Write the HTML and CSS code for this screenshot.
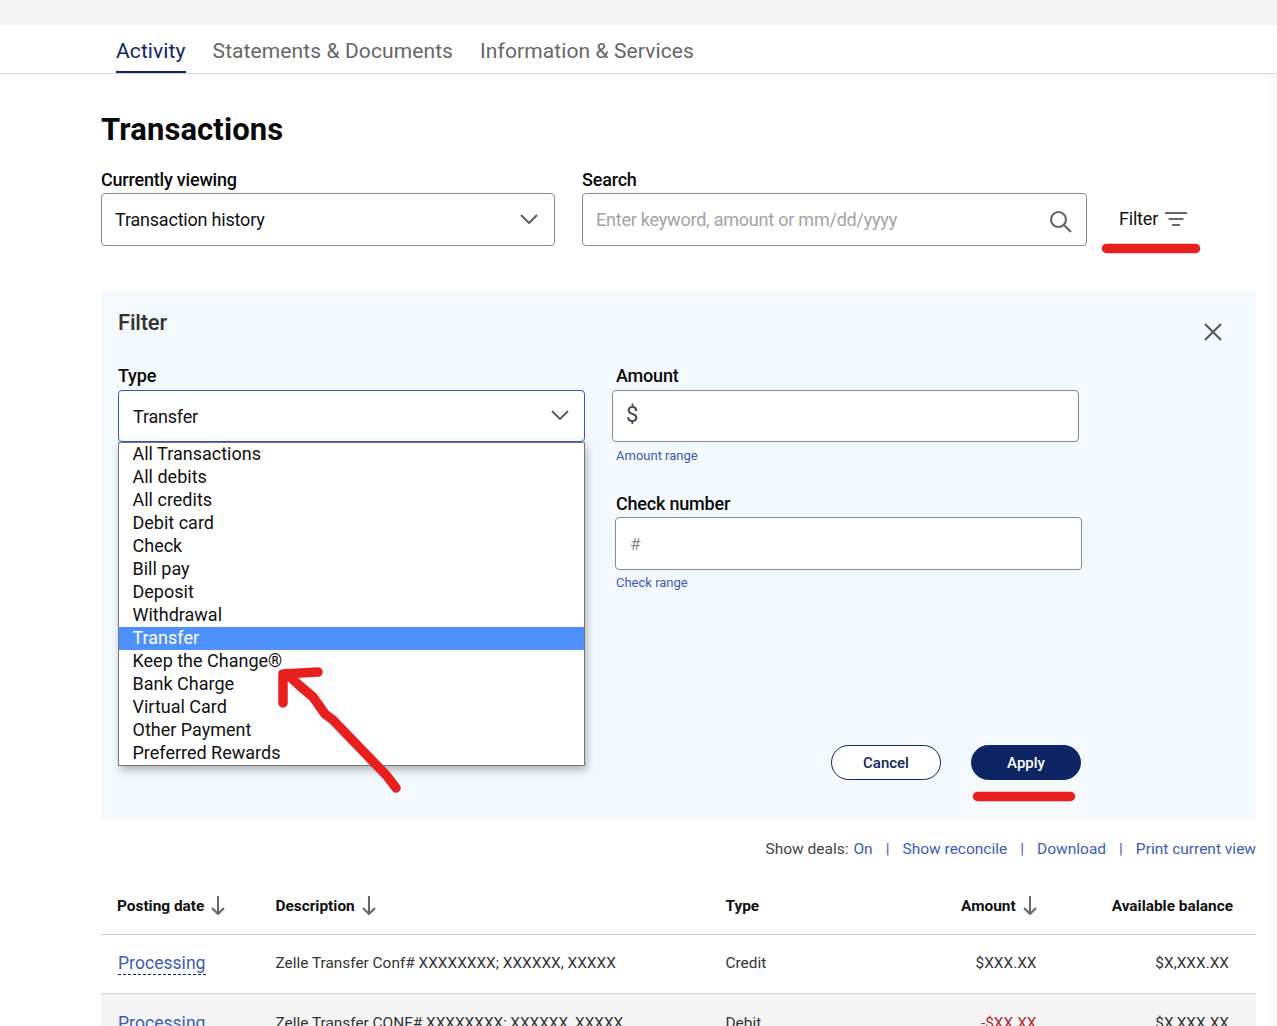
FILE: index.html
```html
<!DOCTYPE html>
<html lang="en">
<head>
  <meta charset="UTF-8" />
  <meta name="viewport" content="width=device-width, initial-scale=1" />
  <title>Activity - Transactions</title>
  <link rel="stylesheet" href="styles.css">
</head>
<body>

<div class="top-band"></div>

<nav class="tabs">
  <a class="tab active">Activity</a>
  <a class="tab">Statements &amp; Documents</a>
  <a class="tab">Information &amp; Services</a>
</nav>

<main class="content">
  <h1>Transactions</h1>

  <div class="toolbar">
    <div class="field view-field">
      <label class="label">Currently viewing</label>
      <div class="box select-box">
        <span>Transaction history</span>
        <svg class="chevron" width="18" height="10" viewBox="0 0 18 10"><path d="M1 1l8 8 8-8" /></svg>
      </div>
    </div>
    <div class="field search-field">
      <label class="label">Search</label>
      <div class="box select-box">
        <span class="placeholder">Enter keyword, amount or mm/dd/yyyy</span>
        <svg class="search-icon" width="24" height="24" viewBox="0 0 24 24"><circle cx="9.500" cy="9.500" r="7.500" /><path d="M15 15l7 7" /></svg>
      </div>
    </div>
    <div class="filter-toggle">
      <span>Filter</span>
      <svg class="filter-icon" width="22" height="14" viewBox="0 0 22 14"><path d="M0 1h22M3.500 7h15M7 13h8" /></svg>
    </div>
  </div>

  <section class="filter-panel">
    <div class="panel-head">
      <h2>Filter</h2>
      <svg class="close-icon" width="18" height="18" viewBox="0 0 18 18"><path d="M1 1l16 16M17 1L1 17" /></svg>
    </div>

    <div class="panel-body">
      <div class="field type-field">
        <label class="label">Type</label>
        <div class="box select-box focused">
          <span>Transfer</span>
          <svg class="chevron" width="18" height="10" viewBox="0 0 18 10"><path d="M1 1l8 8 8-8" /></svg>
        </div>
        <ul class="type-menu">
          <li>All Transactions</li>
          <li>All debits</li>
          <li>All credits</li>
          <li>Debit card</li>
          <li>Check</li>
          <li>Bill pay</li>
          <li>Deposit</li>
          <li>Withdrawal</li>
          <li class="selected">Transfer</li>
          <li>Keep the Change®</li>
          <li>Bank Charge</li>
          <li>Virtual Card</li>
          <li>Other Payment</li>
          <li>Preferred Rewards</li>
        </ul>
      </div>

      <div class="side-fields">
        <div class="field amount-field">
          <label class="label">Amount</label>
          <div class="box amount-box"><span class="dollar">$</span></div>
          <a class="hint">Amount range</a>
        </div>
        <div class="field check-field">
          <label class="label">Check number</label>
          <div class="box check-box"><span class="hash">#</span></div>
          <a class="hint">Check range</a>
        </div>
      </div>
    </div>

    <div class="panel-actions">
      <button class="btn cancel">Cancel</button>
      <button class="btn apply">Apply</button>
    </div>
  </section>

  <div class="links">
    <span>Show deals:</span>
    <a class="deals-on">On</a>
    <i>|</i>
    <a>Show reconcile</a>
    <i>|</i>
    <a>Download</a>
    <i>|</i>
    <a>Print current view</a>
  </div>

  <div class="table">
    <div class="row head">
      <div>Posting date <svg class="sort" width="14" height="19" viewBox="0 0 14 19"><path d="M7 0v18M1 12l6 6 6-6" /></svg></div>
      <div>Description <svg class="sort" width="14" height="19" viewBox="0 0 14 19"><path d="M7 0v18M1 12l6 6 6-6" /></svg></div>
      <div>Type</div>
      <div class="num">Amount <svg class="sort" width="14" height="19" viewBox="0 0 14 19"><path d="M7 0v18M1 12l6 6 6-6" /></svg></div>
      <div class="num balance-head">Available balance</div>
    </div>
    <div class="row">
      <div><a class="processing">Processing</a></div>
      <div>Zelle Transfer Conf# XXXXXXXX; XXXXXX, XXXXX</div>
      <div>Credit</div>
      <div class="num">$XXX.XX</div>
      <div class="num">$X,XXX.XX</div>
    </div>
    <div class="row shaded">
      <div><a class="processing">Processing</a></div>
      <div>Zelle Transfer CONF# XXXXXXXX; XXXXXX, XXXXX</div>
      <div>Debit</div>
      <div class="num negative">-$XX.XX</div>
      <div class="num">$X,XXX.XX</div>
    </div>
  </div>
</main>

<!-- red marker scribbles on top of the screenshot -->
<svg class="marks" width="1277" height="1026" viewBox="0 0 1277 1026">
  <path d="M1106.500 248.500h89" />
  <path d="M977.500 796.500h93" />
  <path d="M396 788l-9-12-27-28-27-28-8-6-12-17-13-11-12-11M283 703l0-29 35-2" />
</svg>

<div class="edge-shadow"></div>

</body>
</html>
```

FILE: styles.css
```css
html, body {
  margin: 0;
  height: 1026px;
  overflow: hidden;
}
body {
  font-family: Roboto, Arial, sans-serif;
  color: #111;
  background: #fff;
  position: relative;
}
a {
  color: #3d5bb5;
}

.top-band {
  height: 25px;
  background: #f4f4f4;
}

.tabs {
  display: flex;
  gap: 27px;
  height: 48px;
  padding-left: 116px;
  border-bottom: 1px solid #d6d6d6;
}
.tab {
  font-size: 21px;
  line-height: 52px;
  letter-spacing: 0.1px;
  color: #666;
}
.tab.active {
  color: #0d2564;
  height: 48px;
  border-bottom: 2px solid #0d2564;
  box-sizing: border-box;
}

.content {
  width: 1155px;
  margin-left: 101px;
}
h1 {
  margin: 37px 0 0;
  font-size: 31px;
  line-height: 38px;
  font-weight: 700;
  letter-spacing: 0.1px;
  color: #0a0a0a;
}

.label {
  display: block;
  margin-bottom: 3px;
  font-size: 18px;
  line-height: 21px;
  font-weight: 500;
  color: #0a0a0a;
  letter-spacing: -0.2px;
}
.box {
  box-sizing: border-box;
  border: 1px solid #8a8a8a;
  border-radius: 4px;
  background: #fff;
}
.select-box {
  display: flex;
  align-items: center;
  justify-content: space-between;
  height: 53px;
  padding: 0 14px 0 13px;
  font-size: 18px;
  letter-spacing: -0.2px;
}
.chevron {
  fill: none;
  stroke: #5f5f5f;
  stroke-width: 2;
  margin: 0 2px 2px 0;
}
.placeholder {
  color: #a3a3a3;
  letter-spacing: -0.22px;
}
.search-icon {
  fill: none;
  stroke: #666;
  stroke-width: 2.200;
  margin: 4px -1px 0 0;
}

.toolbar {
  display: flex;
  margin-top: 20px;
}
.view-field {
  width: 454px;
}
.search-field {
  width: 505px;
  margin-left: 27px;
}
.filter-toggle {
  display: flex;
  align-items: center;
  gap: 7px;
  margin: 23px 0 0 32px;
  height: 53px;
  font-size: 18px;
  letter-spacing: -0.2px;
}
.filter-icon {
  fill: none;
  stroke: #666;
  stroke-width: 2;
}

.filter-panel {
  height: 530px;
  margin-top: 44px;
  padding: 0 17px;
  box-sizing: border-box;
  background: #f4f9fe;
  position: relative;
}
.panel-head {
  display: flex;
  justify-content: space-between;
  height: 75px;
}
h2 {
  margin: 20px 0 0;
  font-size: 22px;
  line-height: 26px;
  font-weight: 500;
  color: #333;
  letter-spacing: -0.2px;
}
.close-icon {
  fill: none;
  stroke: #555;
  stroke-width: 2;
  margin: 33px 17px 0 0;
}

.panel-body {
  display: flex;
}
.panel-body .label {
  margin-bottom: 4px;
}
.type-field {
  width: 467px;
  position: relative;
}
.select-box.focused {
  height: 52px;
  padding-left: 14px;
  border-color: #2a5bc4;
}
.select-box.focused .chevron {
  margin-right: 1px;
}
.type-menu {
  position: absolute;
  left: 0;
  right: 0;
  top: 77px;
  margin: 0;
  padding: 0;
  list-style: none;
  background: #fff;
  border: 1px solid #767676;
  box-shadow: 2px 4px 8px rgba(0, 0, 0, 0.28);
  font-size: 18px;
  line-height: 22px;
  z-index: 2;
}
.type-menu li {
  padding: 0 0 1px 13.500px;
}
.type-menu li.selected {
  background: #4d90fe;
  color: #fff;
}

.side-fields {
  margin-left: 31px;
}
.amount-box {
  width: 467px;
  height: 52px;
  margin-left: -4px;
  padding: 10px 13px;
}
.dollar {
  font-size: 22px;
  line-height: 28px;
  color: #444;
}
.hint {
  display: block;
  margin-top: 6px;
  font-size: 13px;
  line-height: 15px;
}
.check-field {
  margin-top: 30px;
}
.check-field .label {
  margin-bottom: 3px;
}
.check-box {
  width: 467px;
  height: 53px;
  margin-left: -1px;
  padding: 16px 14px;
}
.check-field .hint {
  margin-top: 5px;
}
.hash {
  font-size: 17px;
  line-height: 21px;
  color: #8a8a8a;
}

.panel-actions {
  position: absolute;
  left: 730px;
  top: 455px;
  display: flex;
  gap: 30px;
}
.btn {
  width: 110px;
  height: 35px;
  border-radius: 18px;
  border: 1px solid #0d2564;
  font-family: inherit;
  font-size: 15px;
  font-weight: 500;
  padding: 0;
}
.cancel {
  background: #fff;
  color: #0d2564;
}
.apply {
  background: #0d2564;
  color: #fff;
}

.links {
  display: flex;
  justify-content: flex-end;
  gap: 13px;
  height: 18px;
  margin-top: 20px;
  font-size: 15.500px;
  line-height: 18px;
  color: #444;
}
.links i {
  font-style: normal;
  color: #3d5bb5;
}
.links .deals-on {
  margin-left: -8px;
}

.table {
  margin-top: 17px;
}
.row {
  display: grid;
  grid-template-columns: 158.500px 450px 180px 131px 1fr;
  align-items: center;
  box-sizing: border-box;
  height: 59px;
  padding: 0 27px 2px 16px;
  border-bottom: 1px solid #cfcfcf;
  font-size: 15.400px;
  color: #333;
}
.row.head {
  height: 60px;
  padding-top: 3px;
  padding-bottom: 0;
  font-weight: 700;
  color: #111;
}
.row.shaded {
  background: #f4f4f4;
  border-bottom: none;
}
.num {
  text-align: right;
}
.row.head .balance-head {
  margin-right: -4px;
}
.negative {
  color: #b3262d;
}
.sort {
  fill: none;
  stroke: #666;
  stroke-width: 2;
  vertical-align: -4px;
  margin: -3px 0 0 3px;
}
.processing {
  font-size: 17.600px;
  padding-bottom: 1px;
  border-bottom: 1px dashed #0d2564;
  margin-left: 1px;
}

.marks {
  position: absolute;
  left: 0;
  top: 0;
  pointer-events: none;
  z-index: 3;
  fill: none;
  stroke: #e81f1f;
  stroke-width: 9.500;
  stroke-linecap: round;
  stroke-linejoin: round;
}
.edge-shadow {
  position: absolute;
  right: 0;
  top: 74px;
  bottom: 0;
  width: 12px;
  background: linear-gradient(to right, rgba(0, 0, 0, 0), rgba(0, 0, 0, 0.035));
}
```
